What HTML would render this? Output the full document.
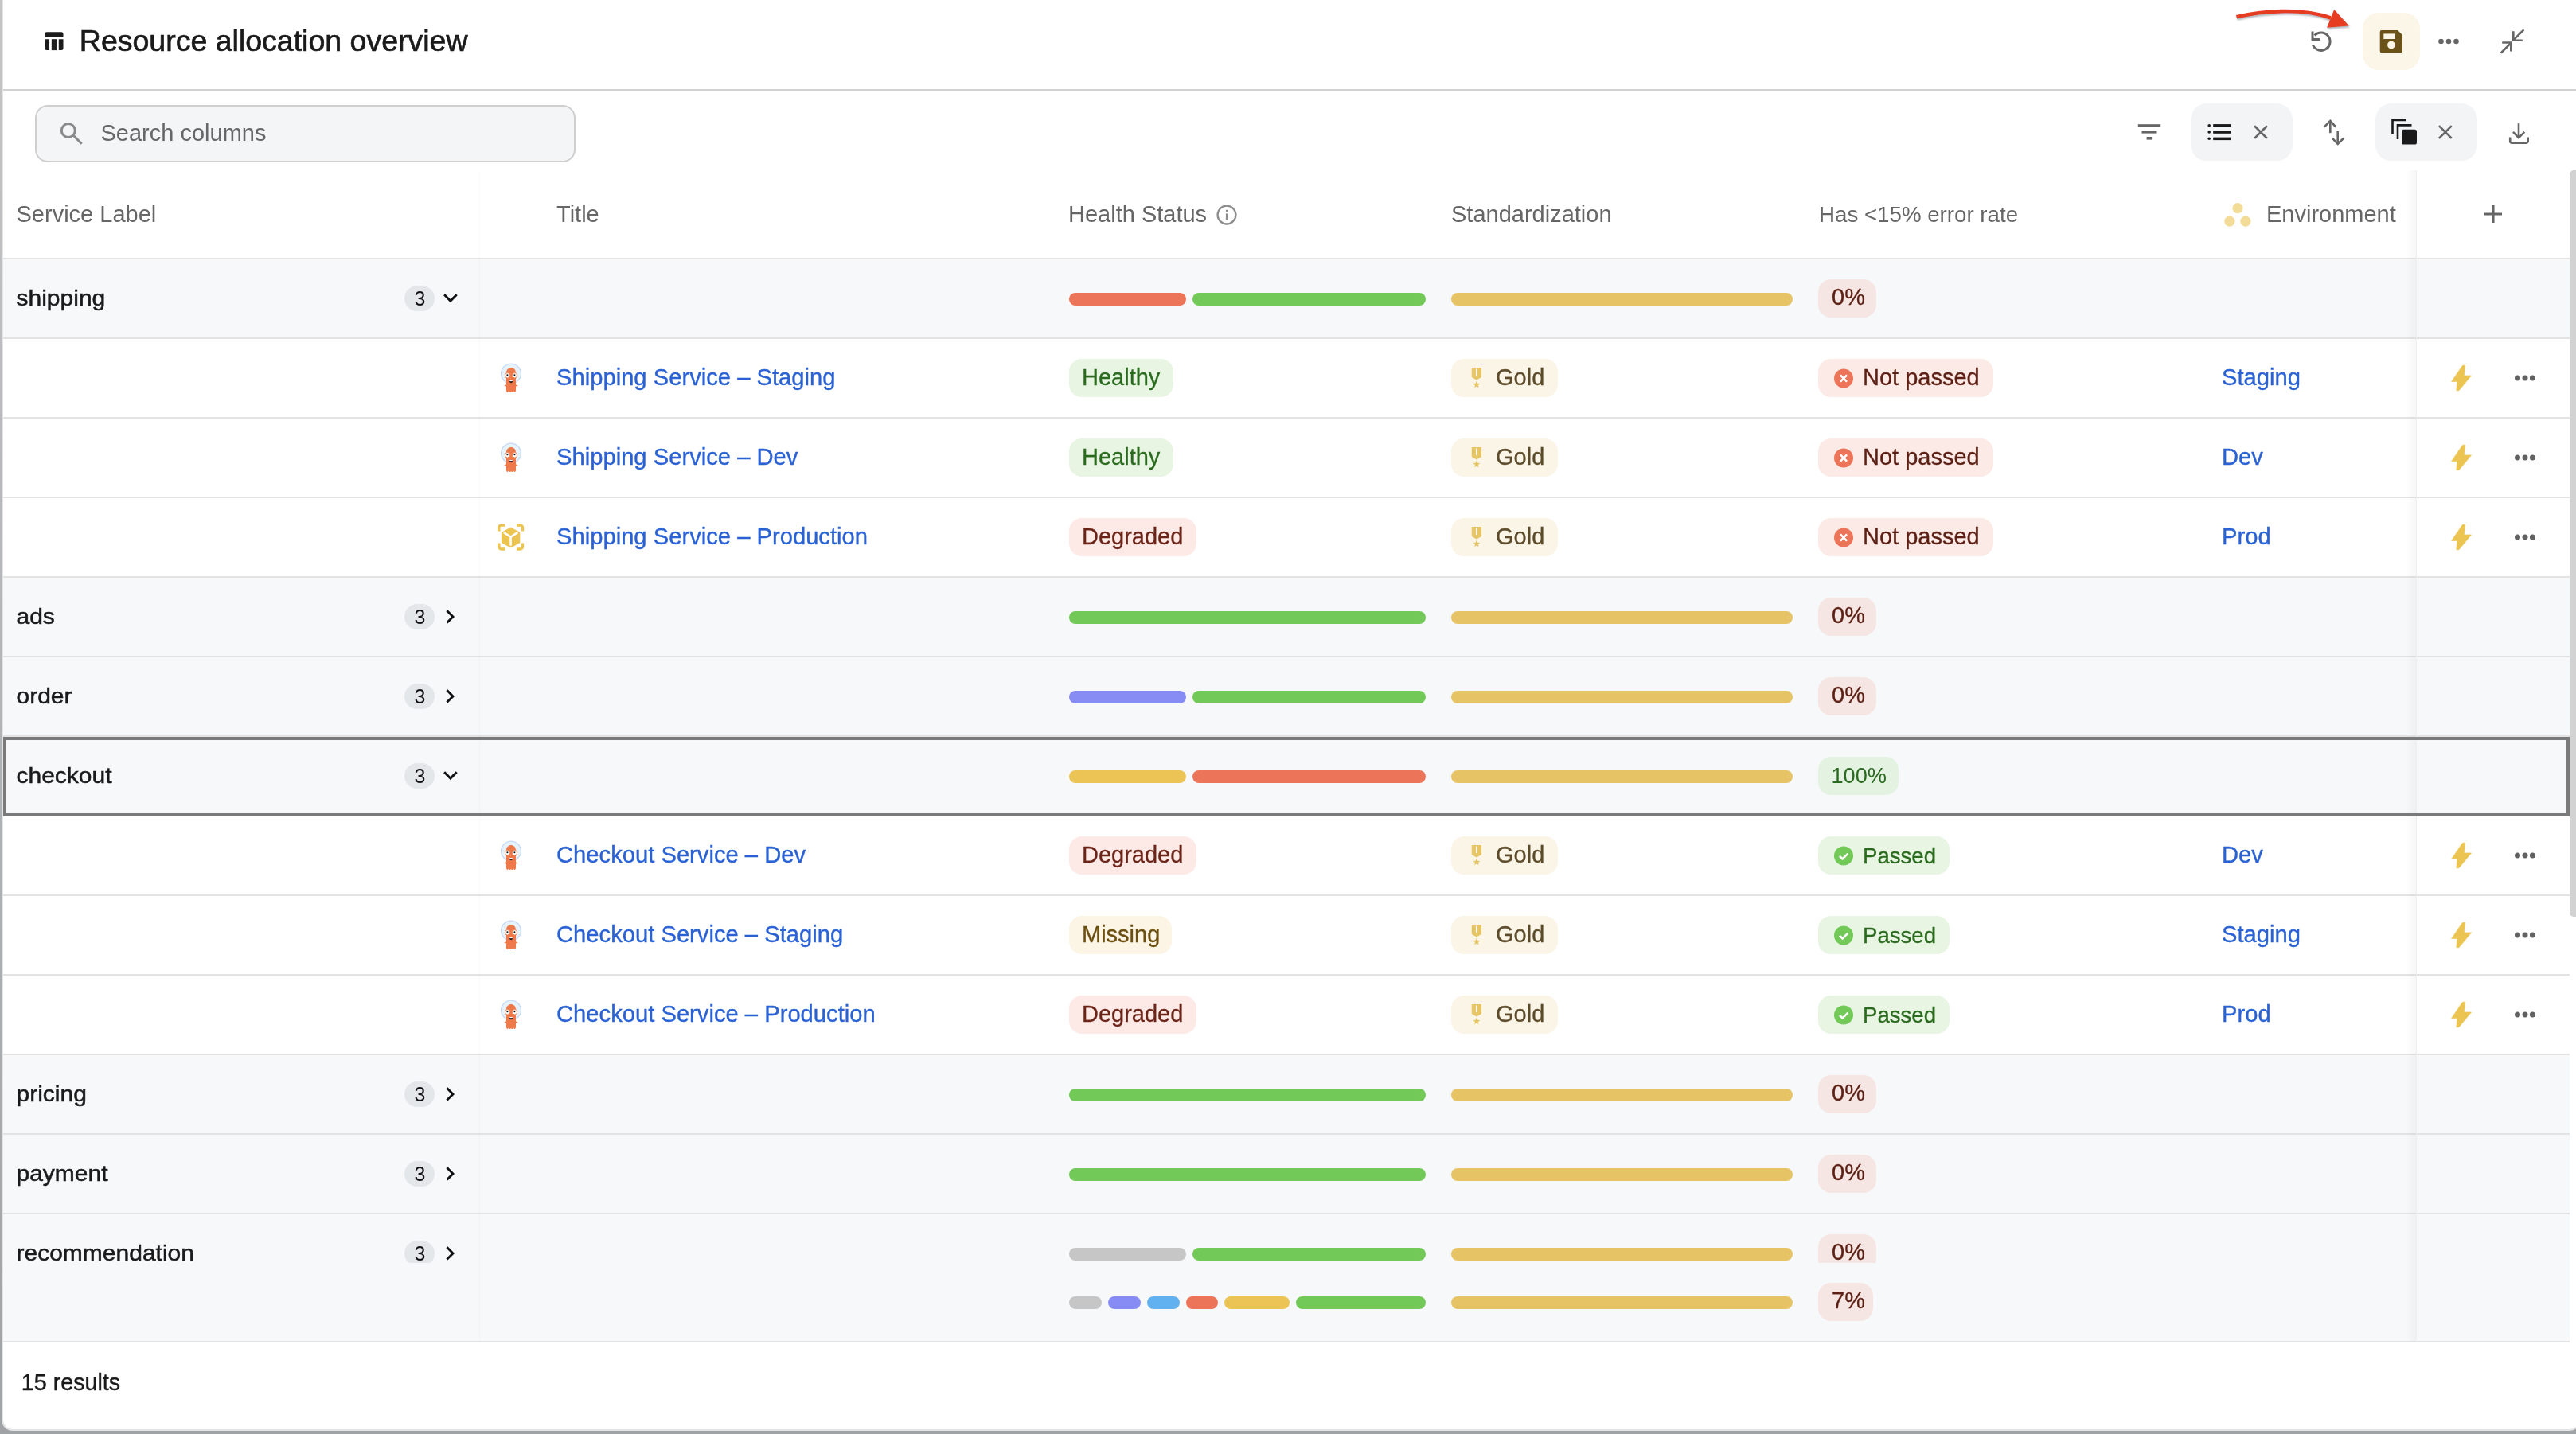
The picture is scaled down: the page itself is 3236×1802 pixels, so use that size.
<!DOCTYPE html>
<html><head><meta charset="utf-8"><style>
html,body{margin:0;padding:0;}
body{width:3236px;height:1802px;position:relative;overflow:hidden;background:linear-gradient(to bottom,#c3c5c7,#a0a3a6);font-family:"Liberation Sans", sans-serif;}
body>div,body>svg{position:absolute;}
.t{white-space:nowrap;}
</style></head><body>
<div style="left:2px;top:-40px;width:3240px;height:1838px;background:#fff;border:2px solid #e4e4e4;border-radius:14px;box-sizing:border-box"></div>
<svg style="position:absolute;left:54px;top:38px;" width="28" height="28" viewBox="0 0 28 28">
<path d="M2.25 4.8 a2.5 2.5 0 0 1 2.5-2.5 h18.25 a2.5 2.5 0 0 1 2.5 2.5 v4 h-23.25z" fill="#1c1c1c"/>
<path d="M2.25 11.2 h5.8 v13.9 h-3.3 a2.5 2.5 0 0 1 -2.5 -2.5z" fill="#1c1c1c"/>
<rect x="10.8" y="11.2" width="6.2" height="13.9" fill="#1c1c1c"/>
<path d="M19.75 11.2 h5.75 v11.4 a2.5 2.5 0 0 1 -2.5 2.5 h-3.25z" fill="#1c1c1c"/>
</svg>
<div class="t" style="left:99.8px;top:32.56px;font-size:37.5px;line-height:37.5px;color:#1a1a1a;-webkit-text-stroke:0.7px #1a1a1a;transform:scaleY(0.97);transform-origin:0 31.74px;">Resource allocation overview</div>
<div style="left:4px;top:112px;width:3236px;height:2px;background:#d2d2d2;"></div>
<svg style="position:absolute;left:2800px;top:0px;" width="160" height="50" viewBox="0 0 160 50">
<defs><filter id="sh" x="-10%" y="-30%" width="130%" height="180%"><feDropShadow dx="1" dy="2" stdDeviation="0.8" flood-color="#6a7a80" flood-opacity="0.55"/></filter></defs>
<g filter="url(#sh)">
<path d="M9.5 21.3 C 40 14, 90 9, 128 22.5" stroke="#e63d23" stroke-width="4.6" fill="none" stroke-linecap="butt"/>
<path d="M132.2 12.1 L150.9 32.5 L123.1 34.8 Z" fill="#e63d23"/>
</g>
</svg>
<svg style="position:absolute;left:2896px;top:32px;" width="40" height="40" viewBox="0 0 40 40">
<path d="M9.5 24.5 A 11.2 11.2 0 1 0 11.6 12.6" stroke="#666" stroke-width="3" fill="none"/>
<path d="M9 7.4 V17.4 H19" stroke="#666" stroke-width="3" fill="none"/>
</svg>
<div style="left:2968px;top:16px;width:72px;height:72px;background:#fcf6e8;border-radius:20px;"></div>
<svg style="position:absolute;left:2988px;top:36px;" width="32" height="32" viewBox="0 0 32 32">
<path d="M1.7 3.9 a2 2 0 0 1 2-2 h20.3 l6 6 v20.3 a2 2 0 0 1 -2 2 h-24.3 a2 2 0 0 1 -2 -2z" fill="#6b5219"/>
<rect x="6.3" y="6.4" width="14.4" height="6.6" fill="#fcf6e8"/>
<circle cx="15.9" cy="20.5" r="4.8" fill="#fcf6e8"/>
</svg>
<svg style="position:absolute;left:3056px;top:42px;" width="40" height="20" viewBox="0 0 40 20"><circle cx="10.5" cy="10" r="3.3" fill="#666"/><circle cx="20" cy="10" r="3.3" fill="#666"/><circle cx="29.5" cy="10" r="3.3" fill="#666"/></svg>
<svg style="position:absolute;left:3136px;top:32px;" width="40" height="40" viewBox="0 0 40 40">
<g stroke="#666" stroke-width="2.6" fill="none">
<path d="M34.4 5.4 L21.6 18.2"/><path d="M21.3 7.3 V18.7 H32.75"/>
<path d="M5.8 34.5 L18.6 21.7"/><path d="M7.2 21.5 H18.3 V32.6"/>
</g></svg>
<div style="left:44px;top:132px;width:679px;height:72px;background:#f4f5f7;border:2px solid #cfcfcf;border-radius:16px;box-sizing:border-box"></div>
<svg style="position:absolute;left:66px;top:145px;" width="50" height="45" viewBox="0 0 50 45"><circle cx="19.8" cy="19" r="8.5" stroke="#878a8a" stroke-width="3" fill="none"/><path d="M26.3 25.4 L36.7 35.8" stroke="#878a8a" stroke-width="3"/></svg>
<div class="t" style="left:126.5px;top:152.95px;font-size:29px;line-height:29px;color:#676767;transform:scaleY(0.999);transform-origin:0 24.55px;">Search columns</div>
<svg style="position:absolute;left:2680px;top:150px;" width="40" height="30" viewBox="0 0 40 30"><rect x="5.8" y="6.2" width="28.4" height="3.6" fill="#666"/><rect x="10.5" y="14.4" width="19" height="3.2" fill="#666"/><rect x="16.6" y="22" width="6.5" height="3.6" fill="#666"/></svg>
<div style="left:2752px;top:130px;width:128px;height:72px;background:#f3f4f6;border-radius:20px;"></div>
<svg style="position:absolute;left:2770px;top:150px;" width="40" height="30" viewBox="0 0 40 30"><g fill="#1a1a1a"><circle cx="5.2" cy="7.8" r="1.8"/><circle cx="5.2" cy="16" r="1.8"/><circle cx="5.2" cy="24.3" r="1.8"/>
<rect x="10.2" y="6.1" width="22" height="3.5"/><rect x="10.2" y="14.3" width="22" height="3.5"/><rect x="10.2" y="22.6" width="22" height="3.5"/></g></svg>
<svg style="position:absolute;left:2826px;top:152px;" width="30" height="28" viewBox="0 0 30 28"><path d="M6.1 6.2 L21.9 21.9 M21.9 6.2 L6.1 21.9" stroke="#666" stroke-width="2.7"/></svg>
<svg style="position:absolute;left:2914px;top:148px;" width="36" height="36" viewBox="0 0 36 36"><g stroke="#666" stroke-width="2.6" fill="none">
<path d="M13.3 4 V19.2"/><path d="M5.7 11.6 L13.3 4 L20.3 11.6"/>
<path d="M22.7 16.8 V32.8"/><path d="M15.8 25.7 L22.7 32.8 L30.1 25.7"/></g></svg>
<div style="left:2984px;top:130px;width:128px;height:72px;background:#f3f4f6;border-radius:20px;"></div>
<svg style="position:absolute;left:3000px;top:146px;" width="40" height="40" viewBox="0 0 40 40"><g stroke="#1a1a1a" stroke-width="2.6" fill="none">
<path d="M5.5 22.8 V4.9 H22.9"/><path d="M12 29 V11.4 H29.5"/></g>
<rect x="17" y="16.8" width="19" height="18.8" rx="2.6" fill="#1a1a1a"/></svg>
<svg style="position:absolute;left:3058px;top:152px;" width="30" height="28" viewBox="0 0 30 28"><path d="M5.9 6.1 L21.8 21.9 M21.8 6.1 L5.9 21.9" stroke="#666" stroke-width="2.7"/></svg>
<svg style="position:absolute;left:3148px;top:150px;" width="34" height="34" viewBox="0 0 34 34"><g stroke="#666" stroke-width="2.6" fill="none">
<path d="M16 5.2 V22.6"/><path d="M9 15.9 L16 23.2 L23.3 15.9"/>
<path d="M5.2 22.6 V27.2 a2.5 2.5 0 0 0 2.5 2.5 H25.2 a2.5 2.5 0 0 0 2.5 -2.5 V22.6"/></g></svg>
<div class="t" style="left:20.5px;top:254.95px;font-size:29px;line-height:29px;color:#666666;transform:scaleY(0.999);transform-origin:0 24.55px;">Service Label</div>
<div class="t" style="left:699px;top:254.95px;font-size:29px;line-height:29px;color:#666666;transform:scaleY(0.999);transform-origin:0 24.55px;">Title</div>
<div class="t" style="left:1342px;top:254.95px;font-size:29px;line-height:29px;color:#666666;transform:scaleY(0.999);transform-origin:0 24.55px;">Health Status</div>
<svg style="position:absolute;left:1526px;top:255px;" width="30" height="30" viewBox="0 0 30 30"><circle cx="15" cy="15.1" r="11.4" stroke="#8c8c8c" stroke-width="2.3" fill="none"/><rect x="13.9" y="8.8" width="2.2" height="2.4" fill="#8c8c8c"/><rect x="13.9" y="13.4" width="2.2" height="7.6" fill="#8c8c8c"/></svg>
<div class="t" style="left:1823px;top:254.95px;font-size:29px;line-height:29px;color:#666666;transform:scaleY(0.999);transform-origin:0 24.55px;">Standardization</div>
<div class="t" style="left:2285px;top:256.05px;font-size:27.7px;line-height:27.7px;color:#666666;transform:scaleY(0.999);transform-origin:0 23.45px;">Has &lt;15% error rate</div>
<svg style="position:absolute;left:2790px;top:250px;" width="40" height="36" viewBox="0 0 40 36"><g fill="#f3db98"><circle cx="21" cy="11.6" r="6.6"/><circle cx="10.9" cy="28.1" r="6.6"/><circle cx="30.9" cy="28.1" r="6.6"/></g></svg>
<div class="t" style="left:2847px;top:254.95px;font-size:29px;line-height:29px;color:#666666;transform:scaleY(0.999);transform-origin:0 24.55px;">Environment</div>
<svg style="position:absolute;left:3116px;top:253px;" width="32" height="32" viewBox="0 0 32 32"><path d="M16 5 V27 M5 16 H27" stroke="#666" stroke-width="3.1"/></svg>
<div style="left:4px;top:324px;width:3224px;height:2px;background:#e3e3e3;"></div>
<div style="left:4px;top:326px;width:3224px;height:99px;background:#f7f8fa;"></div>
<div class="t" style="left:20.5px;top:358.81px;font-size:30px;line-height:30px;color:#1a1a1a;-webkit-text-stroke:0.55px #1a1a1a;transform:scaleY(0.92);transform-origin:0 25.39px;">shipping</div>
<div style="left:508px;top:359px;width:38px;height:32px;background:#e3e7ea;border-radius:16px;"></div>
<div class="t" style="left:520.5px;top:363.14px;font-size:25px;line-height:25px;color:#111111;transform:scaleY(0.999);transform-origin:0 21.16px;">3</div>
<svg style="position:absolute;left:552px;top:361px;" width="28" height="28" viewBox="0 0 28 28"><path d="M6.1 9.3 L13.9 17.1 L21.7 9.3" stroke="#111" stroke-width="2.9" fill="none"/></svg>
<div style="left:1343px;top:368px;width:147px;height:16px;background:#ec7459;border-radius:8px;"></div>
<div style="left:1498px;top:368px;width:293px;height:16px;background:#72c957;border-radius:8px;"></div>
<div style="left:1823px;top:368px;width:429px;height:16px;background:#e6c466;border-radius:8px;"></div>
<div style="left:2284px;top:351px;width:73px;height:48px;background:#f6e6e3;border-radius:16px;"></div>
<div class="t" style="left:2301px;top:359.45px;font-size:29px;line-height:29px;color:#5c1f14;-webkit-text-stroke:0.3px #5c1f14;transform:scaleY(0.999);transform-origin:0 24.55px;">0%</div>
<div style="left:4px;top:424px;width:3224px;height:2px;background:#e3e3e3;"></div>
<div style="left:4px;top:426px;width:3224px;height:99px;background:#ffffff;"></div>
<svg style="position:absolute;left:627px;top:454px;" width="32" height="42" viewBox="0 0 32 42">
<circle cx="15" cy="15.6" r="12.4" fill="#e6f3fb" stroke="#c6d8f6" stroke-width="1.3"/>
<path d="M9 14.5 C9 5.8 21 5.8 21 14.5 V36.5 C21 39.5 19 39.5 18 37.6 C17 39.6 15.5 39.6 15 37.6 C14.5 39.6 13 39.6 12 37.6 C11 39.5 9 39.5 9 36.5 Z" fill="#ee7a4c"/>
<path d="M6.8 30.8 L10 30 M23.2 30.8 L20 30" stroke="#ee7a4c" stroke-width="1.6"/>
<circle cx="10.6" cy="17.8" r="3.2" fill="#fff" stroke="#ee7a4c" stroke-width="0.9"/><circle cx="19.6" cy="17.8" r="3.2" fill="#fff" stroke="#ee7a4c" stroke-width="0.9"/>
<circle cx="10.4" cy="17.3" r="1.05" fill="#111"/><circle cx="19.4" cy="17.3" r="1.05" fill="#111"/>
<path d="M12.6 24 H17.4 Q16.8 27.2 15 27.2 Q13.2 27.2 12.6 24 Z" fill="#222"/><rect x="13.2" y="24" width="3.6" height="1.1" fill="#fff"/>
</svg>
<div class="t" style="left:699px;top:460.28px;font-size:29.2px;line-height:29.2px;color:#2a62d4;-webkit-text-stroke:0.35px #2a62d4;transform:scaleY(0.999);transform-origin:0 24.72px;">Shipping Service – Staging</div>
<div style="left:1343px;top:451px;width:131px;height:48px;background:#e8f5e3;border-radius:16px;"></div>
<div class="t" style="left:1359px;top:460.45px;font-size:29px;line-height:29px;color:#2a6a1e;-webkit-text-stroke:0.3px #2a6a1e;transform:scaleY(0.999);transform-origin:0 24.55px;">Healthy</div>
<div style="left:1823px;top:451px;width:134px;height:48px;background:#fbf5e8;border-radius:16px;"></div>
<svg style="position:absolute;left:1845px;top:460px;" width="20" height="30" viewBox="0 0 20 30"><path d="M3.75 2 H16 V14 L9.9 17.5 L3.75 14 Z" fill="#e5c564"/><rect x="8.9" y="3.4" width="2.1" height="8.8" fill="#fbf5e8"/>
        <path d="M9.90 18.70 L11.08 21.78 L14.37 21.95 L11.80 24.02 L12.66 27.20 L9.90 25.40 L7.14 27.20 L8.00 24.02 L5.43 21.95 L8.72 21.78 Z" fill="#e5c564"/></svg>
<div class="t" style="left:1879px;top:460.45px;font-size:29px;line-height:29px;color:#5c4b2a;-webkit-text-stroke:0.3px #5c4b2a;transform:scaleY(0.999);transform-origin:0 24.55px;">Gold</div>
<div style="left:2284px;top:451px;width:220px;height:48px;background:#fceae6;border-radius:16px;"></div>
<svg style="position:absolute;left:2304px;top:462.5px;" width="25" height="25" viewBox="0 0 25 25"><circle cx="12" cy="12.5" r="12" fill="#ec7459"/><path d="M7.9 8.4 L16.1 16.6 M16.1 8.4 L7.9 16.6" stroke="#fff" stroke-width="2.6"/></svg>
<div class="t" style="left:2340px;top:460.45px;font-size:29px;line-height:29px;color:#5c1f14;-webkit-text-stroke:0.3px #5c1f14;transform:scaleY(0.999);transform-origin:0 24.55px;">Not passed</div>
<div class="t" style="left:2791px;top:460.28px;font-size:29.2px;line-height:29.2px;color:#2a62d4;-webkit-text-stroke:0.35px #2a62d4;transform:scaleY(0.999);transform-origin:0 24.72px;">Staging</div>
<svg style="position:absolute;left:3076px;top:457px;" width="32" height="36" viewBox="0 0 32 36"><path d="M17.5 2.2 H20.6 L19.5 14.9 H28.5 L12.9 33.8 H9.7 L10.7 22.4 H3.6 Z" fill="#ebc452" stroke="#ebc452" stroke-width="0.6" stroke-linejoin="round"/></svg>
<svg style="position:absolute;left:3152px;top:465px;" width="40" height="20" viewBox="0 0 40 20"><circle cx="10.5" cy="10" r="3.5" fill="#616161"/><circle cx="20" cy="10" r="3.5" fill="#616161"/><circle cx="29.4" cy="10" r="3.5" fill="#616161"/></svg>
<div style="left:4px;top:524px;width:3224px;height:2px;background:#e3e3e3;"></div>
<div style="left:4px;top:526px;width:3224px;height:99px;background:#ffffff;"></div>
<svg style="position:absolute;left:627px;top:554px;" width="32" height="42" viewBox="0 0 32 42">
<circle cx="15" cy="15.6" r="12.4" fill="#e6f3fb" stroke="#c6d8f6" stroke-width="1.3"/>
<path d="M9 14.5 C9 5.8 21 5.8 21 14.5 V36.5 C21 39.5 19 39.5 18 37.6 C17 39.6 15.5 39.6 15 37.6 C14.5 39.6 13 39.6 12 37.6 C11 39.5 9 39.5 9 36.5 Z" fill="#ee7a4c"/>
<path d="M6.8 30.8 L10 30 M23.2 30.8 L20 30" stroke="#ee7a4c" stroke-width="1.6"/>
<circle cx="10.6" cy="17.8" r="3.2" fill="#fff" stroke="#ee7a4c" stroke-width="0.9"/><circle cx="19.6" cy="17.8" r="3.2" fill="#fff" stroke="#ee7a4c" stroke-width="0.9"/>
<circle cx="10.4" cy="17.3" r="1.05" fill="#111"/><circle cx="19.4" cy="17.3" r="1.05" fill="#111"/>
<path d="M12.6 24 H17.4 Q16.8 27.2 15 27.2 Q13.2 27.2 12.6 24 Z" fill="#222"/><rect x="13.2" y="24" width="3.6" height="1.1" fill="#fff"/>
</svg>
<div class="t" style="left:699px;top:560.28px;font-size:29.2px;line-height:29.2px;color:#2a62d4;-webkit-text-stroke:0.35px #2a62d4;transform:scaleY(0.999);transform-origin:0 24.72px;">Shipping Service – Dev</div>
<div style="left:1343px;top:551px;width:131px;height:48px;background:#e8f5e3;border-radius:16px;"></div>
<div class="t" style="left:1359px;top:560.45px;font-size:29px;line-height:29px;color:#2a6a1e;-webkit-text-stroke:0.3px #2a6a1e;transform:scaleY(0.999);transform-origin:0 24.55px;">Healthy</div>
<div style="left:1823px;top:551px;width:134px;height:48px;background:#fbf5e8;border-radius:16px;"></div>
<svg style="position:absolute;left:1845px;top:560px;" width="20" height="30" viewBox="0 0 20 30"><path d="M3.75 2 H16 V14 L9.9 17.5 L3.75 14 Z" fill="#e5c564"/><rect x="8.9" y="3.4" width="2.1" height="8.8" fill="#fbf5e8"/>
        <path d="M9.90 18.70 L11.08 21.78 L14.37 21.95 L11.80 24.02 L12.66 27.20 L9.90 25.40 L7.14 27.20 L8.00 24.02 L5.43 21.95 L8.72 21.78 Z" fill="#e5c564"/></svg>
<div class="t" style="left:1879px;top:560.45px;font-size:29px;line-height:29px;color:#5c4b2a;-webkit-text-stroke:0.3px #5c4b2a;transform:scaleY(0.999);transform-origin:0 24.55px;">Gold</div>
<div style="left:2284px;top:551px;width:220px;height:48px;background:#fceae6;border-radius:16px;"></div>
<svg style="position:absolute;left:2304px;top:562.5px;" width="25" height="25" viewBox="0 0 25 25"><circle cx="12" cy="12.5" r="12" fill="#ec7459"/><path d="M7.9 8.4 L16.1 16.6 M16.1 8.4 L7.9 16.6" stroke="#fff" stroke-width="2.6"/></svg>
<div class="t" style="left:2340px;top:560.45px;font-size:29px;line-height:29px;color:#5c1f14;-webkit-text-stroke:0.3px #5c1f14;transform:scaleY(0.999);transform-origin:0 24.55px;">Not passed</div>
<div class="t" style="left:2791px;top:560.28px;font-size:29.2px;line-height:29.2px;color:#2a62d4;-webkit-text-stroke:0.35px #2a62d4;transform:scaleY(0.999);transform-origin:0 24.72px;">Dev</div>
<svg style="position:absolute;left:3076px;top:557px;" width="32" height="36" viewBox="0 0 32 36"><path d="M17.5 2.2 H20.6 L19.5 14.9 H28.5 L12.9 33.8 H9.7 L10.7 22.4 H3.6 Z" fill="#ebc452" stroke="#ebc452" stroke-width="0.6" stroke-linejoin="round"/></svg>
<svg style="position:absolute;left:3152px;top:565px;" width="40" height="20" viewBox="0 0 40 20"><circle cx="10.5" cy="10" r="3.5" fill="#616161"/><circle cx="20" cy="10" r="3.5" fill="#616161"/><circle cx="29.4" cy="10" r="3.5" fill="#616161"/></svg>
<div style="left:4px;top:624px;width:3224px;height:2px;background:#e3e3e3;"></div>
<div style="left:4px;top:626px;width:3224px;height:99px;background:#ffffff;"></div>
<svg style="position:absolute;left:624px;top:657px;" width="36" height="36" viewBox="0 0 36 36">
<g stroke="#ebc452" stroke-width="3.4" fill="none" stroke-linecap="butt">
<path d="M2.8 10.5 V6 a3 3 0 0 1 3 -3 H10.5"/><path d="M25 3 H29.5 a3 3 0 0 1 3 3 V10.5"/>
<path d="M2.8 25.5 V30 a3 3 0 0 0 3 3 H10.5"/><path d="M25 33 H29.5 a3 3 0 0 0 3 -3 V25.5"/>
</g>
<path d="M17.6 5.6 L28.5 11.4 a1.5 1.5 0 0 1 .8 1.3 V24.3 a1.5 1.5 0 0 1 -.8 1.3 L17.6 31.6 L6.7 25.6 a1.5 1.5 0 0 1 -.8 -1.3 V12.7 a1.5 1.5 0 0 1 .8 -1.3 Z" fill="#ebc452"/>
<path d="M9.8 12.6 L17.6 17.8 L25.4 12.6 M17.6 17.8 V27.6" stroke="#fff" stroke-width="2.6" fill="none" stroke-linecap="round"/>
</svg>
<div class="t" style="left:699px;top:660.28px;font-size:29.2px;line-height:29.2px;color:#2a62d4;-webkit-text-stroke:0.35px #2a62d4;transform:scaleY(0.999);transform-origin:0 24.72px;">Shipping Service – Production</div>
<div style="left:1343px;top:651px;width:160px;height:48px;background:#fdeae6;border-radius:16px;"></div>
<div class="t" style="left:1359px;top:660.45px;font-size:29px;line-height:29px;color:#6b2418;-webkit-text-stroke:0.3px #6b2418;transform:scaleY(0.999);transform-origin:0 24.55px;">Degraded</div>
<div style="left:1823px;top:651px;width:134px;height:48px;background:#fbf5e8;border-radius:16px;"></div>
<svg style="position:absolute;left:1845px;top:660px;" width="20" height="30" viewBox="0 0 20 30"><path d="M3.75 2 H16 V14 L9.9 17.5 L3.75 14 Z" fill="#e5c564"/><rect x="8.9" y="3.4" width="2.1" height="8.8" fill="#fbf5e8"/>
        <path d="M9.90 18.70 L11.08 21.78 L14.37 21.95 L11.80 24.02 L12.66 27.20 L9.90 25.40 L7.14 27.20 L8.00 24.02 L5.43 21.95 L8.72 21.78 Z" fill="#e5c564"/></svg>
<div class="t" style="left:1879px;top:660.45px;font-size:29px;line-height:29px;color:#5c4b2a;-webkit-text-stroke:0.3px #5c4b2a;transform:scaleY(0.999);transform-origin:0 24.55px;">Gold</div>
<div style="left:2284px;top:651px;width:220px;height:48px;background:#fceae6;border-radius:16px;"></div>
<svg style="position:absolute;left:2304px;top:662.5px;" width="25" height="25" viewBox="0 0 25 25"><circle cx="12" cy="12.5" r="12" fill="#ec7459"/><path d="M7.9 8.4 L16.1 16.6 M16.1 8.4 L7.9 16.6" stroke="#fff" stroke-width="2.6"/></svg>
<div class="t" style="left:2340px;top:660.45px;font-size:29px;line-height:29px;color:#5c1f14;-webkit-text-stroke:0.3px #5c1f14;transform:scaleY(0.999);transform-origin:0 24.55px;">Not passed</div>
<div class="t" style="left:2791px;top:660.28px;font-size:29.2px;line-height:29.2px;color:#2a62d4;-webkit-text-stroke:0.35px #2a62d4;transform:scaleY(0.999);transform-origin:0 24.72px;">Prod</div>
<svg style="position:absolute;left:3076px;top:657px;" width="32" height="36" viewBox="0 0 32 36"><path d="M17.5 2.2 H20.6 L19.5 14.9 H28.5 L12.9 33.8 H9.7 L10.7 22.4 H3.6 Z" fill="#ebc452" stroke="#ebc452" stroke-width="0.6" stroke-linejoin="round"/></svg>
<svg style="position:absolute;left:3152px;top:665px;" width="40" height="20" viewBox="0 0 40 20"><circle cx="10.5" cy="10" r="3.5" fill="#616161"/><circle cx="20" cy="10" r="3.5" fill="#616161"/><circle cx="29.4" cy="10" r="3.5" fill="#616161"/></svg>
<div style="left:4px;top:724px;width:3224px;height:2px;background:#e3e3e3;"></div>
<div style="left:4px;top:726px;width:3224px;height:99px;background:#f7f8fa;"></div>
<div class="t" style="left:20.5px;top:758.81px;font-size:30px;line-height:30px;color:#1a1a1a;-webkit-text-stroke:0.55px #1a1a1a;transform:scaleY(0.92);transform-origin:0 25.39px;">ads</div>
<div style="left:508px;top:759px;width:38px;height:32px;background:#e3e7ea;border-radius:16px;"></div>
<div class="t" style="left:520.5px;top:763.14px;font-size:25px;line-height:25px;color:#111111;transform:scaleY(0.999);transform-origin:0 21.16px;">3</div>
<svg style="position:absolute;left:552px;top:761px;" width="28" height="28" viewBox="0 0 28 28"><path d="M9.4 6.2 L17 13.9 L9.4 21.6" stroke="#111" stroke-width="2.9" fill="none"/></svg>
<div style="left:1343px;top:768px;width:448px;height:16px;background:#72c957;border-radius:8px;"></div>
<div style="left:1823px;top:768px;width:429px;height:16px;background:#e6c466;border-radius:8px;"></div>
<div style="left:2284px;top:751px;width:73px;height:48px;background:#f6e6e3;border-radius:16px;"></div>
<div class="t" style="left:2301px;top:759.45px;font-size:29px;line-height:29px;color:#5c1f14;-webkit-text-stroke:0.3px #5c1f14;transform:scaleY(0.999);transform-origin:0 24.55px;">0%</div>
<div style="left:4px;top:824px;width:3224px;height:2px;background:#e3e3e3;"></div>
<div style="left:4px;top:826px;width:3224px;height:99px;background:#f7f8fa;"></div>
<div class="t" style="left:20.5px;top:858.81px;font-size:30px;line-height:30px;color:#1a1a1a;-webkit-text-stroke:0.55px #1a1a1a;transform:scaleY(0.92);transform-origin:0 25.39px;">order</div>
<div style="left:508px;top:859px;width:38px;height:32px;background:#e3e7ea;border-radius:16px;"></div>
<div class="t" style="left:520.5px;top:863.14px;font-size:25px;line-height:25px;color:#111111;transform:scaleY(0.999);transform-origin:0 21.16px;">3</div>
<svg style="position:absolute;left:552px;top:861px;" width="28" height="28" viewBox="0 0 28 28"><path d="M9.4 6.2 L17 13.9 L9.4 21.6" stroke="#111" stroke-width="2.9" fill="none"/></svg>
<div style="left:1343px;top:868px;width:147px;height:16px;background:#868cf4;border-radius:8px;"></div>
<div style="left:1498px;top:868px;width:293px;height:16px;background:#72c957;border-radius:8px;"></div>
<div style="left:1823px;top:868px;width:429px;height:16px;background:#e6c466;border-radius:8px;"></div>
<div style="left:2284px;top:851px;width:73px;height:48px;background:#f6e6e3;border-radius:16px;"></div>
<div class="t" style="left:2301px;top:859.45px;font-size:29px;line-height:29px;color:#5c1f14;-webkit-text-stroke:0.3px #5c1f14;transform:scaleY(0.999);transform-origin:0 24.55px;">0%</div>
<div style="left:4px;top:924px;width:3224px;height:2px;background:#e3e3e3;"></div>
<div style="left:4px;top:926px;width:3224px;height:99px;background:#f7f8fa;"></div>
<div class="t" style="left:20.5px;top:958.81px;font-size:30px;line-height:30px;color:#1a1a1a;-webkit-text-stroke:0.55px #1a1a1a;transform:scaleY(0.92);transform-origin:0 25.39px;">checkout</div>
<div style="left:508px;top:959px;width:38px;height:32px;background:#e3e7ea;border-radius:16px;"></div>
<div class="t" style="left:520.5px;top:963.14px;font-size:25px;line-height:25px;color:#111111;transform:scaleY(0.999);transform-origin:0 21.16px;">3</div>
<svg style="position:absolute;left:552px;top:961px;" width="28" height="28" viewBox="0 0 28 28"><path d="M6.1 9.3 L13.9 17.1 L21.7 9.3" stroke="#111" stroke-width="2.9" fill="none"/></svg>
<div style="left:1343px;top:968px;width:147px;height:16px;background:#ecc456;border-radius:8px;"></div>
<div style="left:1498px;top:968px;width:293px;height:16px;background:#ec7459;border-radius:8px;"></div>
<div style="left:1823px;top:968px;width:429px;height:16px;background:#e6c466;border-radius:8px;"></div>
<div style="left:2284px;top:951px;width:101px;height:48px;background:#e4f2e1;border-radius:16px;"></div>
<div class="t" style="left:2300.5px;top:960.98px;font-size:27.2px;line-height:27.2px;color:#2a6a1e;transform:scaleY(0.999);transform-origin:0 23.02px;">100%</div>
<div style="left:4px;top:1024px;width:3224px;height:2px;background:#e3e3e3;"></div>
<div style="left:4px;top:1026px;width:3224px;height:99px;background:#ffffff;"></div>
<svg style="position:absolute;left:627px;top:1054px;" width="32" height="42" viewBox="0 0 32 42">
<circle cx="15" cy="15.6" r="12.4" fill="#e6f3fb" stroke="#c6d8f6" stroke-width="1.3"/>
<path d="M9 14.5 C9 5.8 21 5.8 21 14.5 V36.5 C21 39.5 19 39.5 18 37.6 C17 39.6 15.5 39.6 15 37.6 C14.5 39.6 13 39.6 12 37.6 C11 39.5 9 39.5 9 36.5 Z" fill="#ee7a4c"/>
<path d="M6.8 30.8 L10 30 M23.2 30.8 L20 30" stroke="#ee7a4c" stroke-width="1.6"/>
<circle cx="10.6" cy="17.8" r="3.2" fill="#fff" stroke="#ee7a4c" stroke-width="0.9"/><circle cx="19.6" cy="17.8" r="3.2" fill="#fff" stroke="#ee7a4c" stroke-width="0.9"/>
<circle cx="10.4" cy="17.3" r="1.05" fill="#111"/><circle cx="19.4" cy="17.3" r="1.05" fill="#111"/>
<path d="M12.6 24 H17.4 Q16.8 27.2 15 27.2 Q13.2 27.2 12.6 24 Z" fill="#222"/><rect x="13.2" y="24" width="3.6" height="1.1" fill="#fff"/>
</svg>
<div class="t" style="left:699px;top:1060.28px;font-size:29.2px;line-height:29.2px;color:#2a62d4;-webkit-text-stroke:0.35px #2a62d4;transform:scaleY(0.999);transform-origin:0 24.72px;">Checkout Service – Dev</div>
<div style="left:1343px;top:1051px;width:160px;height:48px;background:#fdeae6;border-radius:16px;"></div>
<div class="t" style="left:1359px;top:1060.45px;font-size:29px;line-height:29px;color:#6b2418;-webkit-text-stroke:0.3px #6b2418;transform:scaleY(0.999);transform-origin:0 24.55px;">Degraded</div>
<div style="left:1823px;top:1051px;width:134px;height:48px;background:#fbf5e8;border-radius:16px;"></div>
<svg style="position:absolute;left:1845px;top:1060px;" width="20" height="30" viewBox="0 0 20 30"><path d="M3.75 2 H16 V14 L9.9 17.5 L3.75 14 Z" fill="#e5c564"/><rect x="8.9" y="3.4" width="2.1" height="8.8" fill="#fbf5e8"/>
        <path d="M9.90 18.70 L11.08 21.78 L14.37 21.95 L11.80 24.02 L12.66 27.20 L9.90 25.40 L7.14 27.20 L8.00 24.02 L5.43 21.95 L8.72 21.78 Z" fill="#e5c564"/></svg>
<div class="t" style="left:1879px;top:1060.45px;font-size:29px;line-height:29px;color:#5c4b2a;-webkit-text-stroke:0.3px #5c4b2a;transform:scaleY(0.999);transform-origin:0 24.55px;">Gold</div>
<div style="left:2284px;top:1051px;width:165px;height:48px;background:#e8f5e3;border-radius:16px;"></div>
<svg style="position:absolute;left:2304px;top:1062.5px;" width="25" height="25" viewBox="0 0 25 25"><circle cx="12" cy="12.5" r="12" fill="#72c957"/><path d="M6.8 12.8 L10.6 16.5 L17.4 9.6" stroke="#fff" stroke-width="2.6" fill="none"/></svg>
<div class="t" style="left:2340px;top:1061.64px;font-size:27.6px;line-height:27.6px;color:#2a6a1e;-webkit-text-stroke:0.3px #2a6a1e;transform:scaleY(0.999);transform-origin:0 23.36px;">Passed</div>
<div class="t" style="left:2791px;top:1060.28px;font-size:29.2px;line-height:29.2px;color:#2a62d4;-webkit-text-stroke:0.35px #2a62d4;transform:scaleY(0.999);transform-origin:0 24.72px;">Dev</div>
<svg style="position:absolute;left:3076px;top:1057px;" width="32" height="36" viewBox="0 0 32 36"><path d="M17.5 2.2 H20.6 L19.5 14.9 H28.5 L12.9 33.8 H9.7 L10.7 22.4 H3.6 Z" fill="#ebc452" stroke="#ebc452" stroke-width="0.6" stroke-linejoin="round"/></svg>
<svg style="position:absolute;left:3152px;top:1065px;" width="40" height="20" viewBox="0 0 40 20"><circle cx="10.5" cy="10" r="3.5" fill="#616161"/><circle cx="20" cy="10" r="3.5" fill="#616161"/><circle cx="29.4" cy="10" r="3.5" fill="#616161"/></svg>
<div style="left:4px;top:1124px;width:3224px;height:2px;background:#e3e3e3;"></div>
<div style="left:4px;top:1126px;width:3224px;height:99px;background:#ffffff;"></div>
<svg style="position:absolute;left:627px;top:1154px;" width="32" height="42" viewBox="0 0 32 42">
<circle cx="15" cy="15.6" r="12.4" fill="#e6f3fb" stroke="#c6d8f6" stroke-width="1.3"/>
<path d="M9 14.5 C9 5.8 21 5.8 21 14.5 V36.5 C21 39.5 19 39.5 18 37.6 C17 39.6 15.5 39.6 15 37.6 C14.5 39.6 13 39.6 12 37.6 C11 39.5 9 39.5 9 36.5 Z" fill="#ee7a4c"/>
<path d="M6.8 30.8 L10 30 M23.2 30.8 L20 30" stroke="#ee7a4c" stroke-width="1.6"/>
<circle cx="10.6" cy="17.8" r="3.2" fill="#fff" stroke="#ee7a4c" stroke-width="0.9"/><circle cx="19.6" cy="17.8" r="3.2" fill="#fff" stroke="#ee7a4c" stroke-width="0.9"/>
<circle cx="10.4" cy="17.3" r="1.05" fill="#111"/><circle cx="19.4" cy="17.3" r="1.05" fill="#111"/>
<path d="M12.6 24 H17.4 Q16.8 27.2 15 27.2 Q13.2 27.2 12.6 24 Z" fill="#222"/><rect x="13.2" y="24" width="3.6" height="1.1" fill="#fff"/>
</svg>
<div class="t" style="left:699px;top:1160.28px;font-size:29.2px;line-height:29.2px;color:#2a62d4;-webkit-text-stroke:0.35px #2a62d4;transform:scaleY(0.999);transform-origin:0 24.72px;">Checkout Service – Staging</div>
<div style="left:1343px;top:1151px;width:129px;height:48px;background:#fcf5e6;border-radius:16px;"></div>
<div class="t" style="left:1359px;top:1160.45px;font-size:29px;line-height:29px;color:#6b4f10;-webkit-text-stroke:0.3px #6b4f10;transform:scaleY(0.999);transform-origin:0 24.55px;">Missing</div>
<div style="left:1823px;top:1151px;width:134px;height:48px;background:#fbf5e8;border-radius:16px;"></div>
<svg style="position:absolute;left:1845px;top:1160px;" width="20" height="30" viewBox="0 0 20 30"><path d="M3.75 2 H16 V14 L9.9 17.5 L3.75 14 Z" fill="#e5c564"/><rect x="8.9" y="3.4" width="2.1" height="8.8" fill="#fbf5e8"/>
        <path d="M9.90 18.70 L11.08 21.78 L14.37 21.95 L11.80 24.02 L12.66 27.20 L9.90 25.40 L7.14 27.20 L8.00 24.02 L5.43 21.95 L8.72 21.78 Z" fill="#e5c564"/></svg>
<div class="t" style="left:1879px;top:1160.45px;font-size:29px;line-height:29px;color:#5c4b2a;-webkit-text-stroke:0.3px #5c4b2a;transform:scaleY(0.999);transform-origin:0 24.55px;">Gold</div>
<div style="left:2284px;top:1151px;width:165px;height:48px;background:#e8f5e3;border-radius:16px;"></div>
<svg style="position:absolute;left:2304px;top:1162.5px;" width="25" height="25" viewBox="0 0 25 25"><circle cx="12" cy="12.5" r="12" fill="#72c957"/><path d="M6.8 12.8 L10.6 16.5 L17.4 9.6" stroke="#fff" stroke-width="2.6" fill="none"/></svg>
<div class="t" style="left:2340px;top:1161.64px;font-size:27.6px;line-height:27.6px;color:#2a6a1e;-webkit-text-stroke:0.3px #2a6a1e;transform:scaleY(0.999);transform-origin:0 23.36px;">Passed</div>
<div class="t" style="left:2791px;top:1160.28px;font-size:29.2px;line-height:29.2px;color:#2a62d4;-webkit-text-stroke:0.35px #2a62d4;transform:scaleY(0.999);transform-origin:0 24.72px;">Staging</div>
<svg style="position:absolute;left:3076px;top:1157px;" width="32" height="36" viewBox="0 0 32 36"><path d="M17.5 2.2 H20.6 L19.5 14.9 H28.5 L12.9 33.8 H9.7 L10.7 22.4 H3.6 Z" fill="#ebc452" stroke="#ebc452" stroke-width="0.6" stroke-linejoin="round"/></svg>
<svg style="position:absolute;left:3152px;top:1165px;" width="40" height="20" viewBox="0 0 40 20"><circle cx="10.5" cy="10" r="3.5" fill="#616161"/><circle cx="20" cy="10" r="3.5" fill="#616161"/><circle cx="29.4" cy="10" r="3.5" fill="#616161"/></svg>
<div style="left:4px;top:1224px;width:3224px;height:2px;background:#e3e3e3;"></div>
<div style="left:4px;top:1226px;width:3224px;height:99px;background:#ffffff;"></div>
<svg style="position:absolute;left:627px;top:1254px;" width="32" height="42" viewBox="0 0 32 42">
<circle cx="15" cy="15.6" r="12.4" fill="#e6f3fb" stroke="#c6d8f6" stroke-width="1.3"/>
<path d="M9 14.5 C9 5.8 21 5.8 21 14.5 V36.5 C21 39.5 19 39.5 18 37.6 C17 39.6 15.5 39.6 15 37.6 C14.5 39.6 13 39.6 12 37.6 C11 39.5 9 39.5 9 36.5 Z" fill="#ee7a4c"/>
<path d="M6.8 30.8 L10 30 M23.2 30.8 L20 30" stroke="#ee7a4c" stroke-width="1.6"/>
<circle cx="10.6" cy="17.8" r="3.2" fill="#fff" stroke="#ee7a4c" stroke-width="0.9"/><circle cx="19.6" cy="17.8" r="3.2" fill="#fff" stroke="#ee7a4c" stroke-width="0.9"/>
<circle cx="10.4" cy="17.3" r="1.05" fill="#111"/><circle cx="19.4" cy="17.3" r="1.05" fill="#111"/>
<path d="M12.6 24 H17.4 Q16.8 27.2 15 27.2 Q13.2 27.2 12.6 24 Z" fill="#222"/><rect x="13.2" y="24" width="3.6" height="1.1" fill="#fff"/>
</svg>
<div class="t" style="left:699px;top:1260.28px;font-size:29.2px;line-height:29.2px;color:#2a62d4;-webkit-text-stroke:0.35px #2a62d4;transform:scaleY(0.999);transform-origin:0 24.72px;">Checkout Service – Production</div>
<div style="left:1343px;top:1251px;width:160px;height:48px;background:#fdeae6;border-radius:16px;"></div>
<div class="t" style="left:1359px;top:1260.45px;font-size:29px;line-height:29px;color:#6b2418;-webkit-text-stroke:0.3px #6b2418;transform:scaleY(0.999);transform-origin:0 24.55px;">Degraded</div>
<div style="left:1823px;top:1251px;width:134px;height:48px;background:#fbf5e8;border-radius:16px;"></div>
<svg style="position:absolute;left:1845px;top:1260px;" width="20" height="30" viewBox="0 0 20 30"><path d="M3.75 2 H16 V14 L9.9 17.5 L3.75 14 Z" fill="#e5c564"/><rect x="8.9" y="3.4" width="2.1" height="8.8" fill="#fbf5e8"/>
        <path d="M9.90 18.70 L11.08 21.78 L14.37 21.95 L11.80 24.02 L12.66 27.20 L9.90 25.40 L7.14 27.20 L8.00 24.02 L5.43 21.95 L8.72 21.78 Z" fill="#e5c564"/></svg>
<div class="t" style="left:1879px;top:1260.45px;font-size:29px;line-height:29px;color:#5c4b2a;-webkit-text-stroke:0.3px #5c4b2a;transform:scaleY(0.999);transform-origin:0 24.55px;">Gold</div>
<div style="left:2284px;top:1251px;width:165px;height:48px;background:#e8f5e3;border-radius:16px;"></div>
<svg style="position:absolute;left:2304px;top:1262.5px;" width="25" height="25" viewBox="0 0 25 25"><circle cx="12" cy="12.5" r="12" fill="#72c957"/><path d="M6.8 12.8 L10.6 16.5 L17.4 9.6" stroke="#fff" stroke-width="2.6" fill="none"/></svg>
<div class="t" style="left:2340px;top:1261.64px;font-size:27.6px;line-height:27.6px;color:#2a6a1e;-webkit-text-stroke:0.3px #2a6a1e;transform:scaleY(0.999);transform-origin:0 23.36px;">Passed</div>
<div class="t" style="left:2791px;top:1260.28px;font-size:29.2px;line-height:29.2px;color:#2a62d4;-webkit-text-stroke:0.35px #2a62d4;transform:scaleY(0.999);transform-origin:0 24.72px;">Prod</div>
<svg style="position:absolute;left:3076px;top:1257px;" width="32" height="36" viewBox="0 0 32 36"><path d="M17.5 2.2 H20.6 L19.5 14.9 H28.5 L12.9 33.8 H9.7 L10.7 22.4 H3.6 Z" fill="#ebc452" stroke="#ebc452" stroke-width="0.6" stroke-linejoin="round"/></svg>
<svg style="position:absolute;left:3152px;top:1265px;" width="40" height="20" viewBox="0 0 40 20"><circle cx="10.5" cy="10" r="3.5" fill="#616161"/><circle cx="20" cy="10" r="3.5" fill="#616161"/><circle cx="29.4" cy="10" r="3.5" fill="#616161"/></svg>
<div style="left:4px;top:1324px;width:3224px;height:2px;background:#e3e3e3;"></div>
<div style="left:4px;top:1326px;width:3224px;height:99px;background:#f7f8fa;"></div>
<div class="t" style="left:20.5px;top:1358.81px;font-size:30px;line-height:30px;color:#1a1a1a;-webkit-text-stroke:0.55px #1a1a1a;transform:scaleY(0.92);transform-origin:0 25.39px;">pricing</div>
<div style="left:508px;top:1359px;width:38px;height:32px;background:#e3e7ea;border-radius:16px;"></div>
<div class="t" style="left:520.5px;top:1363.14px;font-size:25px;line-height:25px;color:#111111;transform:scaleY(0.999);transform-origin:0 21.16px;">3</div>
<svg style="position:absolute;left:552px;top:1361px;" width="28" height="28" viewBox="0 0 28 28"><path d="M9.4 6.2 L17 13.9 L9.4 21.6" stroke="#111" stroke-width="2.9" fill="none"/></svg>
<div style="left:1343px;top:1368px;width:448px;height:16px;background:#72c957;border-radius:8px;"></div>
<div style="left:1823px;top:1368px;width:429px;height:16px;background:#e6c466;border-radius:8px;"></div>
<div style="left:2284px;top:1351px;width:73px;height:48px;background:#f6e6e3;border-radius:16px;"></div>
<div class="t" style="left:2301px;top:1359.45px;font-size:29px;line-height:29px;color:#5c1f14;-webkit-text-stroke:0.3px #5c1f14;transform:scaleY(0.999);transform-origin:0 24.55px;">0%</div>
<div style="left:4px;top:1424px;width:3224px;height:2px;background:#e3e3e3;"></div>
<div style="left:4px;top:1426px;width:3224px;height:99px;background:#f7f8fa;"></div>
<div class="t" style="left:20.5px;top:1458.81px;font-size:30px;line-height:30px;color:#1a1a1a;-webkit-text-stroke:0.55px #1a1a1a;transform:scaleY(0.92);transform-origin:0 25.39px;">payment</div>
<div style="left:508px;top:1459px;width:38px;height:32px;background:#e3e7ea;border-radius:16px;"></div>
<div class="t" style="left:520.5px;top:1463.14px;font-size:25px;line-height:25px;color:#111111;transform:scaleY(0.999);transform-origin:0 21.16px;">3</div>
<svg style="position:absolute;left:552px;top:1461px;" width="28" height="28" viewBox="0 0 28 28"><path d="M9.4 6.2 L17 13.9 L9.4 21.6" stroke="#111" stroke-width="2.9" fill="none"/></svg>
<div style="left:1343px;top:1468px;width:448px;height:16px;background:#72c957;border-radius:8px;"></div>
<div style="left:1823px;top:1468px;width:429px;height:16px;background:#e6c466;border-radius:8px;"></div>
<div style="left:2284px;top:1451px;width:73px;height:48px;background:#f6e6e3;border-radius:16px;"></div>
<div class="t" style="left:2301px;top:1459.45px;font-size:29px;line-height:29px;color:#5c1f14;-webkit-text-stroke:0.3px #5c1f14;transform:scaleY(0.999);transform-origin:0 24.55px;">0%</div>
<div style="left:4px;top:1524px;width:3224px;height:2px;background:#e3e3e3;"></div>
<div style="left:4px;top:1526px;width:3224px;height:99px;background:#f7f8fa;"></div>
<div class="t" style="left:20.5px;top:1558.81px;font-size:30px;line-height:30px;color:#1a1a1a;-webkit-text-stroke:0.55px #1a1a1a;transform:scaleY(0.92);transform-origin:0 25.39px;">recommendation</div>
<div style="left:508px;top:1559px;width:38px;height:32px;background:#e3e7ea;border-radius:16px;"></div>
<div class="t" style="left:520.5px;top:1563.14px;font-size:25px;line-height:25px;color:#111111;transform:scaleY(0.999);transform-origin:0 21.16px;">3</div>
<svg style="position:absolute;left:552px;top:1561px;" width="28" height="28" viewBox="0 0 28 28"><path d="M9.4 6.2 L17 13.9 L9.4 21.6" stroke="#111" stroke-width="2.9" fill="none"/></svg>
<div style="left:1343px;top:1568px;width:147px;height:16px;background:#c6c6c6;border-radius:8px;"></div>
<div style="left:1498px;top:1568px;width:293px;height:16px;background:#72c957;border-radius:8px;"></div>
<div style="left:1823px;top:1568px;width:429px;height:16px;background:#e6c466;border-radius:8px;"></div>
<div style="left:2284px;top:1551px;width:73px;height:48px;background:#f6e6e3;border-radius:16px;"></div>
<div class="t" style="left:2301px;top:1559.45px;font-size:29px;line-height:29px;color:#5c1f14;-webkit-text-stroke:0.3px #5c1f14;transform:scaleY(0.999);transform-origin:0 24.55px;">0%</div>
<div style="left:4px;top:1624px;width:3224px;height:2px;background:#e3e3e3;"></div>
<div style="left:4px;top:1587px;width:3224px;height:99px;background:#f7f8fa;"></div>
<div style="left:1343px;top:1629px;width:41px;height:16px;background:#c6c6c6;border-radius:8px;"></div>
<div style="left:1392px;top:1629px;width:41px;height:16px;background:#868cf4;border-radius:8px;"></div>
<div style="left:1441px;top:1629px;width:41px;height:16px;background:#61b0ef;border-radius:8px;"></div>
<div style="left:1490px;top:1629px;width:40px;height:16px;background:#ec7459;border-radius:8px;"></div>
<div style="left:1538px;top:1629px;width:82px;height:16px;background:#ecc456;border-radius:8px;"></div>
<div style="left:1628px;top:1629px;width:163px;height:16px;background:#72c957;border-radius:8px;"></div>
<div style="left:1823px;top:1629px;width:429px;height:16px;background:#e6c466;border-radius:8px;"></div>
<div style="left:2284px;top:1612px;width:69px;height:48px;background:#f6e6e3;border-radius:16px;"></div>
<div class="t" style="left:2301px;top:1620.45px;font-size:29px;line-height:29px;color:#5c1f14;-webkit-text-stroke:0.3px #5c1f14;transform:scaleY(0.999);transform-origin:0 24.55px;">7%</div>
<div style="left:4px;top:1685px;width:3224px;height:2px;background:#e3e3e3;"></div>
<div class="t" style="left:26.8px;top:1722.91px;font-size:28.7px;line-height:28.7px;color:#1a1a1a;-webkit-text-stroke:0.45px #1a1a1a;transform:scaleY(1.03);transform-origin:0 24.29px;">15 results</div>
<div style="left:3022px;top:214px;width:14px;height:1472px;background:linear-gradient(to right, rgba(0,0,0,0), rgba(0,0,0,0.035))"></div>
<div style="left:3035px;top:214px;width:1px;height:1472px;background:#eeeeee;"></div>
<div style="left:602px;top:214px;width:1px;height:1472px;background:rgba(0,0,0,0.018);"></div>
<div style="left:4px;top:926px;width:3224px;height:100px;border:4px solid #7a7a7a;box-sizing:border-box"></div>
<div style="left:3228px;top:214px;width:8px;height:938px;background:#d2d2d2;border-radius:5px 0 0 5px;"></div>
</body></html>
